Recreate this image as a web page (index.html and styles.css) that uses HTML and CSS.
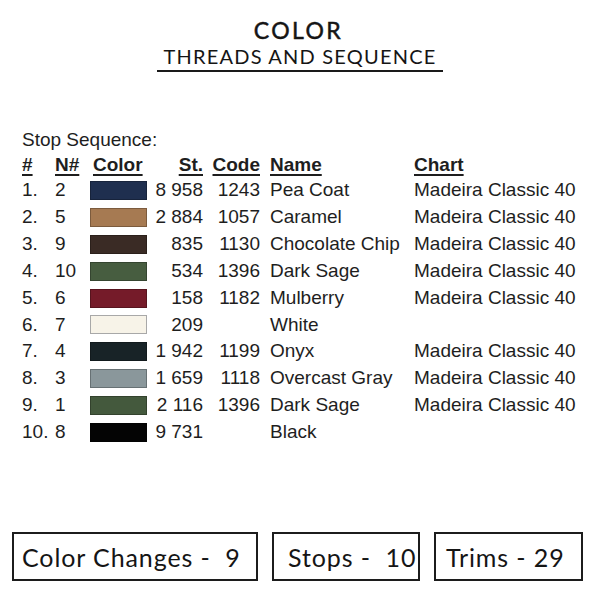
FILE: index.html
```html
<!DOCTYPE html>
<html>
<head>
<meta charset="utf-8">
<link rel="stylesheet" href="styles.css">
</head>
<body>
<div class="page">
  <header class="head">
    <div class="title">COLOR</div>
    <div class="subtitle">THREADS AND SEQUENCE</div>
  </header>

  <section class="seq">
    <div class="caption">Stop Sequence:</div>
    <table class="tbl">
      <colgroup>
        <col class="c-num"><col class="c-n"><col class="c-color"><col class="c-st"><col class="c-code"><col class="c-name"><col class="c-chart">
      </colgroup>
      <thead>
        <tr><th>#</th><th>N#</th><th class="h-color">Color</th><th class="r">St.</th><th class="r">Code</th><th class="nm">Name</th><th>Chart</th></tr>
      </thead>
      <tbody>
        <tr><td>1.</td><td>2</td><td><span class="sw sw-peacoat"></span></td><td class="r">8 958</td><td class="r">1243</td><td class="nm">Pea Coat</td><td>Madeira Classic 40</td></tr>
        <tr><td>2.</td><td>5</td><td><span class="sw sw-caramel"></span></td><td class="r">2 884</td><td class="r">1057</td><td class="nm">Caramel</td><td>Madeira Classic 40</td></tr>
        <tr><td>3.</td><td>9</td><td><span class="sw sw-choc"></span></td><td class="r">835</td><td class="r">1130</td><td class="nm">Chocolate Chip</td><td>Madeira Classic 40</td></tr>
        <tr><td>4.</td><td>10</td><td><span class="sw sw-sage"></span></td><td class="r">534</td><td class="r">1396</td><td class="nm">Dark Sage</td><td>Madeira Classic 40</td></tr>
        <tr><td>5.</td><td>6</td><td><span class="sw sw-mulberry"></span></td><td class="r">158</td><td class="r">1182</td><td class="nm">Mulberry</td><td>Madeira Classic 40</td></tr>
        <tr><td>6.</td><td>7</td><td><span class="sw sw-white"></span></td><td class="r">209</td><td class="r"></td><td class="nm">White</td><td></td></tr>
        <tr><td>7.</td><td>4</td><td><span class="sw sw-onyx"></span></td><td class="r">1 942</td><td class="r">1199</td><td class="nm">Onyx</td><td>Madeira Classic 40</td></tr>
        <tr><td>8.</td><td>3</td><td><span class="sw sw-gray"></span></td><td class="r">1 659</td><td class="r">1118</td><td class="nm">Overcast Gray</td><td>Madeira Classic 40</td></tr>
        <tr><td>9.</td><td>1</td><td><span class="sw sw-sage2"></span></td><td class="r">2 116</td><td class="r">1396</td><td class="nm">Dark Sage</td><td>Madeira Classic 40</td></tr>
        <tr><td>10.</td><td>8</td><td><span class="sw sw-black"></span></td><td class="r">9 731</td><td class="r"></td><td class="nm">Black</td><td></td></tr>
      </tbody>
    </table>
  </section>

  <footer class="stats">
    <div class="box box-changes">Color Changes -  9</div>
    <div class="box box-stops">Stops -  10</div>
    <div class="box box-trims">Trims - 29</div>
  </footer>
</div>
</body>
</html>
```
FILE: styles.css
```css
html, body {
  margin: 0;
  padding: 0;
  background: #ffffff;
}

.page {
  width: 600px;
  height: 600px;
  overflow: hidden;
  display: flex;
  flex-direction: column;
}

.head {
  padding-top: 17px;
  display: flex;
  flex-direction: column;
  align-items: center;
  font-family: Lato, "Open Sans", sans-serif;
  color: #151515;
}

.title {
  font-size: 23px;
  line-height: 26px;
  font-weight: 400;
  -webkit-text-stroke: 0.5px #151515;
  letter-spacing: 2.4px;
  margin-left: -3px;
}

.subtitle {
  width: 286px;
  margin-top: 1px;
  text-align: center;
  font-size: 20px;
  line-height: 24px;
  letter-spacing: 1.2px;
  padding-bottom: 2px;
  border-bottom: 2px solid #1a1a1a;
}

.seq {
  margin-top: 55px;
  padding-left: 22px;
  font-family: "Liberation Sans", Arial, sans-serif;
  font-size: 19px;
  color: #1e1e1e;
}

.caption {
  line-height: 26px;
  height: 26px;
}

.tbl {
  border-collapse: collapse;
  table-layout: fixed;
  width: 578px;
}

.c-num { width: 33px; }
.c-n { width: 35px; }
.c-color { width: 63px; }
.c-st { width: 50px; }
.c-code { width: 57px; }
.c-name { width: 154px; }
.c-chart { width: 186px; }

.tbl th, .tbl td {
  padding: 0;
  text-align: left;
  white-space: nowrap;
  vertical-align: middle;
}

.tbl th {
  font-weight: bold;
  text-decoration: underline;
  text-decoration-thickness: 2px;
  text-underline-offset: 3px;
  height: 24px;
  line-height: 24px;
  vertical-align: top;
}

.tbl td {
  height: 26.9px;
  line-height: 26.9px;
}

.tbl .r { text-align: right; }
.tbl .nm { padding-left: 10px; }
.tbl .h-color { padding-left: 3px; }

.sw {
  display: block;
  width: 55px;
  height: 17px;
  border: 1px solid rgba(0, 0, 0, 0.25);
}

.sw-peacoat { background: #1f2f4f; }
.sw-caramel { background: #a67a52; }
.sw-choc { background: #3a2b25; }
.sw-sage { background: #475d40; }
.sw-mulberry { background: #751b29; }
.sw-white { background: #f7f3e8; border-color: #a8a8a8; }
.sw-onyx { background: #182327; }
.sw-gray { background: #8a979b; }
.sw-sage2 { background: #44593d; }
.sw-black { background: #040404; }

.stats {
  margin-top: auto;
  margin-bottom: 19px;
  padding-left: 12px;
  display: flex;
  gap: 14px;
  font-family: Lato, "Open Sans", sans-serif;
  font-size: 25px;
  letter-spacing: 0.9px;
  color: #151515;
}

.box {
  box-sizing: border-box;
  height: 49px;
  border: 2px solid #1c1c1c;
  display: flex;
  align-items: center;
  white-space: pre;
  padding-left: 8px;
}

.box-changes { width: 246px; }
.box-stops { width: 148px; padding-left: 14px; }
.box-trims { width: 149px; padding-left: 10px; }
```
